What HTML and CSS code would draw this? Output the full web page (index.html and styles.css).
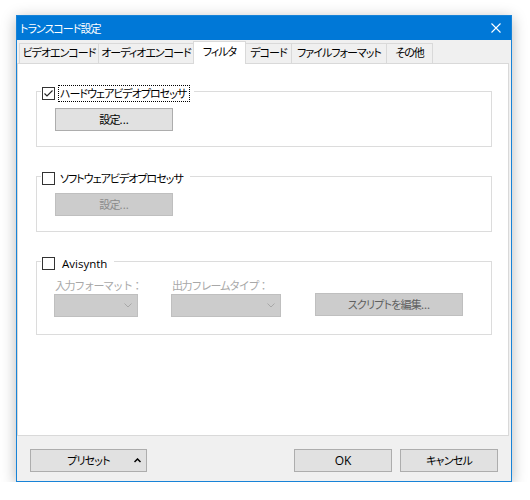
FILE: index.html
```html
<!DOCTYPE html>
<html lang="ja">
<head>
<meta charset="utf-8">
<title>トランスコード設定</title>
<link rel="stylesheet" href="styles.css">
</head>
<body>
<div class="window">
  <div class="titlebar">
    <span class="title">トランスコード設定</span>
    <svg class="close" width="10" height="10" viewBox="0 0 10 10"><path d="M0.5 0.5 L9.5 9.5 M9.5 0.5 L0.5 9.5" stroke="#fff" stroke-width="1.1" fill="none"/></svg>
  </div>
  <div class="tabs">
    <div class="tab t1">ビデオエンコード</div>
    <div class="tab t2">オーディオエンコード</div>
    <div class="tab t3 active">フィルタ</div>
    <div class="tab t4">デコード</div>
    <div class="tab t5">ファイルフォーマット</div>
    <div class="tab t6">その他</div>
  </div>
  <div class="panel">
    <div class="group">
      <div class="group-head">
        <span class="cb"><svg width="11" height="11" viewBox="0 0 11 11"><path d="M1.5 5.5 L4 8 L9.5 2.5" stroke="#222" stroke-width="1.1" fill="none"/></svg></span>
        <span class="lbl focus">ハードウェアビデオプロセッサ</span>
      </div>
      <button class="btn gbtn">設定<span class="dots">...</span></button>
    </div>
    <div class="group">
      <div class="group-head">
        <span class="cb"></span>
        <span class="lbl">ソフトウェアビデオプロセッサ</span>
      </div>
      <button class="btn gbtn disabled">設定<span class="dots">...</span></button>
    </div>
    <div class="group">
      <div class="group-head">
        <span class="cb"></span>
        <span class="lbl latin">Avisynth</span>
      </div>
      <div class="row">
        <div class="col c1">
          <span class="dlabel">入力フォーマット：</span>
          <div class="combo"><svg width="8" height="5" viewBox="0 0 8 5"><path d="M0.5 0.5 L4 4 L7.5 0.5" stroke="#a8a8a8" stroke-width="1" fill="none"/></svg></div>
        </div>
        <div class="col c2">
          <span class="dlabel">出力フレームタイプ：</span>
          <div class="combo"><svg width="8" height="5" viewBox="0 0 8 5"><path d="M0.5 0.5 L4 4 L7.5 0.5" stroke="#a8a8a8" stroke-width="1" fill="none"/></svg></div>
        </div>
        <button class="btn script disabled">スクリプトを編集<span class="dots">...</span></button>
      </div>
    </div>
  </div>
  <div class="footer">
    <button class="btn preset"><span class="ptext">プリセット</span><svg class="caret" width="7" height="5" viewBox="0 0 7 5"><path d="M0.5 4 L3.5 1 L6.5 4" stroke="#000" stroke-width="1.5" fill="none"/></svg></button>
    <button class="btn ok latin">OK</button>
    <button class="btn cancel">キャンセル</button>
  </div>
</div>
</body>
</html>
```
FILE: styles.css
```css
body {
  margin: 0;
  background: #fff;
  font-family: "Noto Sans CJK JP", "Noto Sans", sans-serif;
  font-size: 11px;
  letter-spacing: -1px;
  font-feature-settings: "palt";
  color: #000;
}

.window {
  margin: 15px 0 0 16px;
  width: 496px;
  height: 467px;
  box-sizing: border-box;
  border: 1px solid #1883d7;
  background: #f0f0f0;
  display: flex;
  flex-direction: column;
  box-shadow: 0 3px 14px rgba(0, 0, 0, 0.28);
}

.titlebar {
  height: 24px;
  flex: none;
  background: #0078d7;
  color: #fff;
  display: flex;
  align-items: center;
  justify-content: space-between;
  padding: 0 10px 0 3px;
}

.title {
  line-height: 16px;
  font-size: 11px;
  letter-spacing: -1px;
}

.close {
  display: block;
}

.tabs {
  height: 23px;
  flex: none;
  display: flex;
  align-items: flex-end;
  padding-left: 2px;
}

.tab {
  height: 20px;
  box-sizing: border-box;
  border: 1px solid #d9d9d9;
  border-bottom: none;
  margin-right: -1px;
  text-align: center;
  line-height: 16px;
  background: #f0f0f0;
  white-space: nowrap;
}

.tab.active {
  height: 23px;
  margin-bottom: -1px;
  background: #fff;
  position: relative;
  z-index: 1;
  line-height: 18px;
}

.t1 { width: 80px; }
.t2 { width: 96px; }
.t3 { width: 53px; }
.t4 { width: 47px; }
.t5 { width: 96px; }
.t6 { width: 47px; }

.panel {
  flex: 1;
  background: #fff;
  border: 1px solid #d9d9d9;
  margin-right: 2px;
  padding: 27px 16px 0 18px;
}

.group {
  border: 1px solid #dcdcdc;
  margin-bottom: 29px;
}

.group-head {
  display: flex;
  align-items: center;
  width: fit-content;
  height: 17px;
  background: #fff;
  margin: -7px 0 0 4px;
  padding: 0 4px 0 1px;
}

.cb {
  width: 13px;
  height: 13px;
  box-sizing: border-box;
  border: 1px solid #333;
  background: #fff;
  display: flex;
  align-items: center;
  justify-content: center;
}

.cb svg {
  display: block;
}

.lbl {
  margin-left: 3px;
  border: 1px dotted transparent;
  padding: 0 2px 0 1px;
  line-height: 15px;
  white-space: nowrap;
}

.lbl.focus {
  border-color: #000;
  padding-right: 3px;
}

.latin {
  font-family: "Open Sans", "Noto Sans", sans-serif;
  font-size: 11.5px;
  letter-spacing: 0;
}

.lbl.latin {
  margin-left: 5px;
}

.dots {
  letter-spacing: 0;
}

.btn {
  height: 23px;
  box-sizing: border-box;
  border: 1px solid #adadad;
  background: #e1e1e1;
  font: inherit;
  letter-spacing: -0.8px;
  font-feature-settings: inherit;
  color: #000;
  padding: 0;
  line-height: 21px;
  text-align: center;
  white-space: nowrap;
}

.btn.latin {
  font-family: "Open Sans", "Noto Sans", sans-serif;
  font-size: 12px;
  letter-spacing: 0;
}

.btn.disabled {
  background: #cccccc;
  border-color: #bfbfbf;
  color: #8a8a8a;
}

.gbtn {
  display: block;
  width: 118px;
  margin: 6px 0 15px 18px;
}

.row {
  display: flex;
  align-items: flex-end;
  margin: 5px 0 17px 17px;
}

.col {
  display: flex;
  flex-direction: column;
}

.c1 { width: 84px; }
.c2 { width: 110px; margin-left: 33px; }

.dlabel {
  line-height: 16px;
  margin-left: 1px;
  color: #a8a8a8;
  white-space: nowrap;
  font-feature-settings: normal;
  letter-spacing: -1.4px;
}

.combo {
  margin-top: 1px;
  height: 23px;
  box-sizing: border-box;
  border: 1px solid #bfbfbf;
  background: #cccccc;
  display: flex;
  justify-content: flex-end;
  align-items: center;
  padding-right: 5px;
}

.combo svg {
  display: block;
}

.script {
  width: 148px;
  margin: 0 0 1px 34px;
}

.btn.script.disabled {
  color: #606060;
}

.footer {
  height: 45px;
  flex: none;
  box-sizing: border-box;
  display: flex;
  align-items: flex-start;
  padding: 13px 13px 0 13px;
}

.preset {
  width: 117px;
  display: flex;
  align-items: center;
  padding-left: 12px;
}

.ptext {
  flex: 1;
  text-align: center;
}

.caret {
  display: block;
  margin: 0 5px 1px 0;
}

.ok {
  width: 98px;
  margin-left: auto;
}

.cancel {
  width: 98px;
  margin-left: 8px;
}
```
